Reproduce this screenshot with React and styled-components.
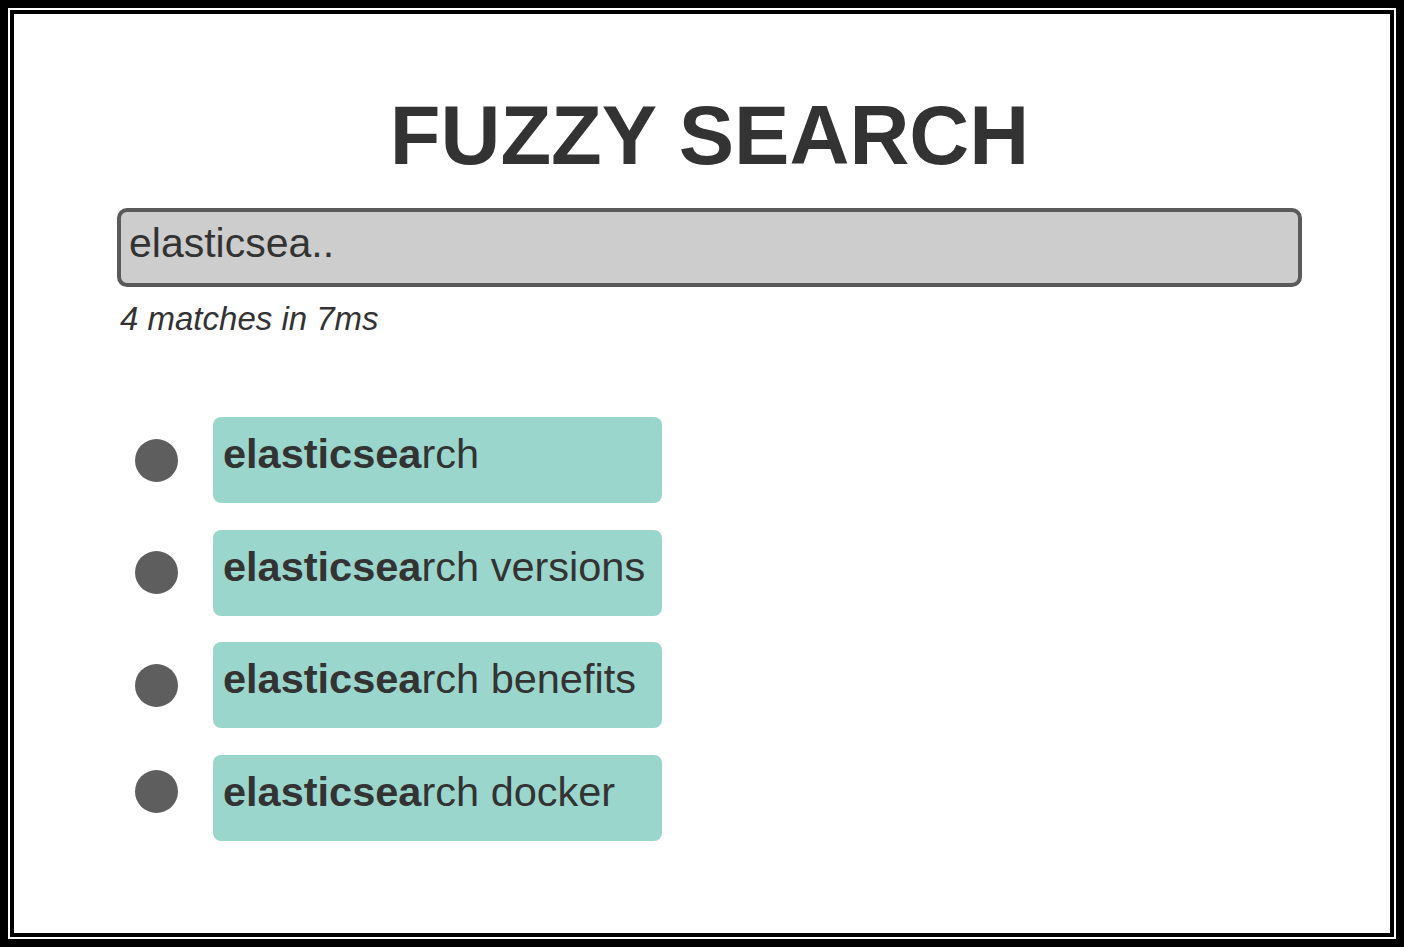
import React, { useState } from "react";
import styled, { createGlobalStyle } from 'styled-components';

// Page reset
const GlobalStyle = createGlobalStyle`
  html, body, #root {
    margin: 0;
    height: 100%;
  }
  body {
    font-family: "Liberation Sans", Arial, sans-serif;
    color: #333;
  }
`;

// Double black frame round the page
const Frame = styled.div`
  height: 100%;
  box-sizing: border-box;
  border: 8px solid #000;
  padding: 2px;
  background: #fff;
`;

const Panel = styled.div`
  height: 100%;
  box-sizing: border-box;
  border: 4px solid #000;
  padding: 74px 88px 0 103px;
`;

const Title = styled.h1`
  margin: 0 0 24px;
  font-size: 83px;
  font-weight: 700;
  text-align: center;
  color: #333;
`;

const SearchInput = styled.input`
  display: block;
  width: 100%;
  height: 79px;
  box-sizing: border-box;
  border: 4px solid #5a5a5a;
  border-radius: 10px;
  background: #cdcdcd;
  padding: 0 8px 9px;
  font-family: "Liberation Sans", Arial, sans-serif;
  font-size: 41px;
  color: #333;
  outline: none;
`;

const Stats = styled.div`
  margin: 13px 0 0 3px;
  font-size: 33px;
  font-style: italic;
  color: #333;
`;

const List = styled.ul`
  list-style: none;
  margin: 79px 0 0;
  padding: 0 0 0 18px;
  display: flex;
  flex-direction: column;
  gap: 26.5px;
`;

const Row = styled.li`
  display: flex;
  align-items: center;
  gap: 35px;
`;

const Bullet = styled.span`
  width: 43px;
  height: 43px;
  border-radius: 50%;
  background: #5e5e5e;
  flex-shrink: 0;
  margin-top: ${p => p.$shift || 0}px;
`;

const Item = styled.div`
  width: 449px;
  height: 86px;
  box-sizing: border-box;
  padding: 13px 10px 0;
  border-radius: 8px;
  background: #9bd6cc;
  font-size: 41.5px;
  color: #333;
  white-space: nowrap;
`;

const Match = styled.b`
  font-weight: 700;
`;

const results = [
  'elasticsearch',
  'elasticsearch versions',
  'elasticsearch benefits',
  'elasticsearch docker',
];

const App = () => {
  const [query, setQuery] = useState('elasticsea..');
  const typed = 'elasticsea';

  return (
    <>
      <GlobalStyle />
      <Frame>
        <Panel>
          <Title>FUZZY SEARCH</Title>
          <SearchInput
            type="text"
            value={query}
            onChange={e => setQuery(e.target.value)}
            aria-label="Search"
          />
          <Stats>4 matches in 7ms</Stats>
          <List>
            {results.map((r, i) => (
              <Row key={r}>
                <Bullet $shift={i === 3 ? -12 : 0} />
                <Item>
                  <Match>{r.slice(0, typed.length)}</Match>
                  {r.slice(typed.length)}
                </Item>
              </Row>
            ))}
          </List>
        </Panel>
      </Frame>
    </>
  );
};

export default App;
